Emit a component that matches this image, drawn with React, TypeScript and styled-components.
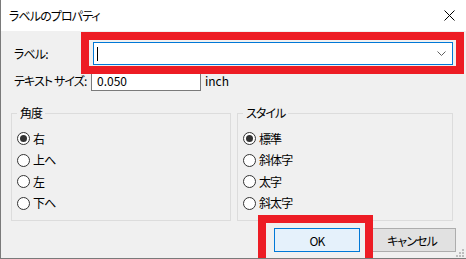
import React from 'react';
import styled, { createGlobalStyle } from 'styled-components';

const Global = createGlobalStyle`
    html, body {
        margin: 0;
        padding: 0;
        background: #f0f0f0;
    }
    body {
        font-family: "Noto Sans CJK JP", "Noto Sans", sans-serif;
        font-size: 12px;
        font-feature-settings: "palt";
        letter-spacing: -0.9px;
        color: #000;
    }
`;

const Dialog = styled.div`
    position: relative;
    width: 466px;
    height: 259px;
    box-sizing: border-box;
    background: #f0f0f0;
    border-left: 1px solid #7a7a7a;
    border-bottom: 1px solid #7a7a7a;
    display: flex;
    flex-direction: column;
    overflow: hidden;
`;

const TitleBar = styled.div`
    height: 31px;
    flex: none;
    background: #fff;
    display: flex;
    align-items: center;
    justify-content: space-between;
    padding: 0 11px 0 8px;
`;

const Title = styled.span`
    font-size: 12px;
    line-height: 14px;
`;

const Row = styled.div<{ $top: number; $h: number }>`
    display: flex;
    align-items: center;
    margin-top: ${(p) => p.$top}px;
    height: ${(p) => p.$h}px;
`;

const Label = styled.div<{ $w: number }>`
    width: ${(p) => p.$w}px;
    box-sizing: border-box;
    padding-left: 13px;
    line-height: 14px;
    white-space: nowrap;
    flex: none;
`;

const Combo = styled.div`
    width: 360px;
    height: 23px;
    box-sizing: border-box;
    background: #fff;
    border: 1px solid #0078d7;
    display: flex;
    align-items: center;
    justify-content: space-between;
    padding: 0 6px 0 3px;
`;

const Caret = styled.span`
    width: 1px;
    height: 14px;
    background: #000;
`;

const TextBox = styled.div`
    width: 110px;
    height: 21px;
    box-sizing: border-box;
    background: #fff;
    border: 1px solid #7a7a7a;
    padding-left: 5px;
    letter-spacing: 0;
    display: flex;
    align-items: center;
`;

const Unit = styled.span`
    margin-left: 4px;
    letter-spacing: 0;
`;

const Groups = styled.div`
    display: flex;
    gap: 6px;
    margin-top: 15px;
    padding-left: 10px;
`;

const Group = styled.fieldset<{ $w: number }>`
    width: ${(p) => p.$w}px;
    height: 115px;
    box-sizing: border-box;
    margin: 0;
    padding: 12px 5px 0 5px;
    border: 1px solid #dcdcdc;
    display: flex;
    flex-direction: column;
    gap: 8.5px;
`;

const Legend = styled.legend`
    padding: 0 3px;
    line-height: 14px;
    font-size: 12px;
`;

const RadioRow = styled.div`
    display: flex;
    align-items: center;
    gap: 3px;
    height: 13px;
    line-height: 14px;
`;

const Circle = styled.span<{ $on?: boolean }>`
    width: 13px;
    height: 13px;
    box-sizing: border-box;
    border-radius: 50%;
    border: 1px solid #333;
    background: #fff;
    display: flex;
    align-items: center;
    justify-content: center;
    flex: none;
    &::after {
        content: '';
        display: ${(p) => (p.$on ? 'block' : 'none')};
        width: 7px;
        height: 7px;
        border-radius: 50%;
        background: #333;
    }
`;

const Buttons = styled.div`
    display: flex;
    justify-content: flex-end;
    gap: 8px;
    margin-top: 7px;
    padding-right: 10px;
`;

const Button = styled.div<{ $primary?: boolean }>`
    height: 24px;
    box-sizing: border-box;
    width: ${(p) => (p.$primary ? 86 : 88)}px;
    display: flex;
    align-items: center;
    justify-content: center;
    background: ${(p) => (p.$primary ? '#e5f1fb' : '#e1e1e1')};
    border: 1px solid ${(p) => (p.$primary ? '#0078d7' : '#adadad')};
`;

const Highlight = styled.div<{ $x: number; $y: number; $w: number; $h: number }>`
    position: absolute;
    left: ${(p) => p.$x}px;
    top: ${(p) => p.$y}px;
    width: ${(p) => p.$w}px;
    height: ${(p) => p.$h}px;
    box-sizing: border-box;
    border: 8px solid #ed1c24;
    pointer-events: none;
`;

const Grip = styled.svg`
    position: absolute;
    right: 2px;
    bottom: 1px;
`;

const Radio = ({ label, on }: { label: string; on?: boolean }) => (
    <RadioRow>
        <Circle $on={on} />
        <span>{label}</span>
    </RadioRow>
);

const App = () => {
    return (
        <>
            <Global />
            <Dialog>
                <TitleBar>
                    <Title>ラベルのプロパティ</Title>
                    <svg width="11" height="11" viewBox="0 0 11 11">
                        <path d="M0.5 0.5 L10.5 10.5 M10.5 0.5 L0.5 10.5" stroke="#000" strokeWidth="1" fill="none" />
                    </svg>
                </TitleBar>
                <Row $top={11} $h={23}>
                    <Label $w={92}>ラベル:</Label>
                    <Combo>
                        <Caret />
                        <svg width="9" height="5" viewBox="0 0 9 5">
                            <path d="M0.5 0.5 L4.5 4.5 L8.5 0.5" stroke="#606060" strokeWidth="1" fill="none" />
                        </svg>
                    </Combo>
                </Row>
                <Row $top={5} $h={21}>
                    <Label $w={90}>テキスト サイズ:</Label>
                    <TextBox>0.050</TextBox>
                    <Unit>inch</Unit>
                </Row>
                <Groups>
                    <Group $w={220}>
                        <Legend>角度</Legend>
                        <Radio label="右" on />
                        <Radio label="上へ" />
                        <Radio label="左" />
                        <Radio label="下へ" />
                    </Group>
                    <Group $w={216}>
                        <Legend>スタイル</Legend>
                        <Radio label="標準" on />
                        <Radio label="斜体字" />
                        <Radio label="太字" />
                        <Radio label="斜太字" />
                    </Group>
                </Groups>
                <Buttons>
                    <Button $primary>OK</Button>
                    <Button>キャンセル</Button>
                </Buttons>
                <Highlight $x={80} $y={32} $w={383} $h={42} />
                <Highlight $x={257} $y={215} $w={115} $h={52} />
                <Grip width="9" height="9" viewBox="0 0 9 9">
                    <rect x="7" y="1" width="2" height="2" fill="#bdbdbd" />
                    <rect x="4" y="4" width="2" height="2" fill="#bdbdbd" />
                    <rect x="7" y="4" width="2" height="2" fill="#bdbdbd" />
                    <rect x="1" y="7" width="2" height="2" fill="#bdbdbd" />
                    <rect x="4" y="7" width="2" height="2" fill="#bdbdbd" />
                    <rect x="7" y="7" width="2" height="2" fill="#bdbdbd" />
                </Grip>
            </Dialog>
        </>
    );
};

export default App;
